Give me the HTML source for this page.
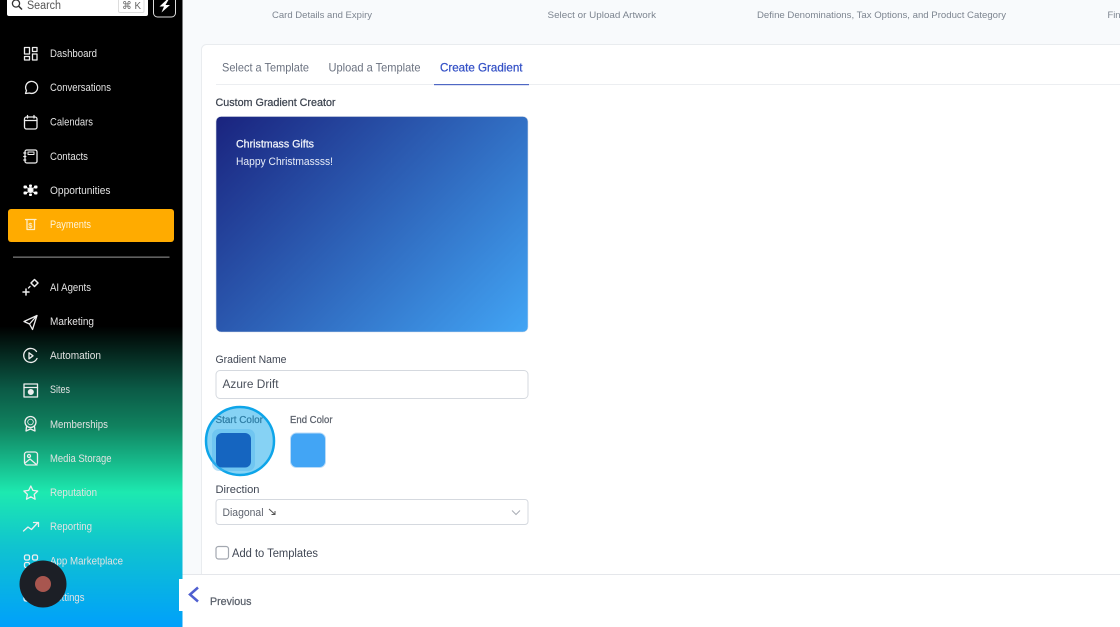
<!DOCTYPE html>
<html><head><meta charset="utf-8">
<style>
html,body{margin:0;padding:0;width:1120px;height:627px;overflow:hidden;background:#f8fafc}
svg{display:block;position:absolute;left:0;top:0;filter:blur(.3px)}
text{font-family:"Liberation Sans",sans-serif}
.n{font-size:11px;fill:#e2e2e2}
.i{fill:none;stroke:#eee;stroke-width:1.3;stroke-linejoin:round;stroke-linecap:round}
.m{stroke-width:.25px}
</style></head><body>
<svg width="1120" height="627" viewBox="0 0 1120 627" xmlns="http://www.w3.org/2000/svg">
<defs>
<linearGradient id="side" x1="0" y1="0" x2="0" y2="1">
<stop offset="0" stop-color="#000"/><stop offset=".52" stop-color="#000"/>
<stop offset=".62" stop-color="#0b5a46"/><stop offset=".68" stop-color="#10825f"/>
<stop offset=".785" stop-color="#1de9b0"/><stop offset=".87" stop-color="#10c4cf"/>
<stop offset="1" stop-color="#00a0fb"/>
</linearGradient>
<linearGradient id="card" gradientUnits="userSpaceOnUse" x1="240.100" y1="92.400" x2="503.900" y2="356.100">
<stop offset="0" stop-color="#1a237e"/><stop offset="1" stop-color="#42a5f5"/>
</linearGradient>
</defs>
<rect x="0" y="0" width="1120" height="627" fill="#f8fafc"/>

<!-- sidebar -->
<rect x="0" y="0" width="182.500" height="627" fill="url(#side)"/>
<rect x="7" y="-6" width="141" height="22" rx="2" fill="#fff"/>
<circle cx="16" cy="3.500" r="3.600" fill="none" stroke="#333" stroke-width="1.300"/>
<path d="M18.800 6.300L22 9.500" stroke="#333" stroke-width="1.500" fill="none"/>
<text x="27" y="9" font-size="11.500" fill="#555" textLength="34" lengthAdjust="spacingAndGlyphs">Search</text>
<rect x="118.500" y="-5" width="25.500" height="17.500" rx="1.500" fill="#fff" stroke="#ddd"/>
<text x="122" y="9" font-size="10.500" fill="#666" textLength="19" lengthAdjust="spacingAndGlyphs">⌘ K</text>
<rect x="153.500" y="-6" width="22" height="23" rx="4" fill="#000" stroke="#ddd" stroke-width="1"/>
<path d="M167.500 -1L159.500 6.500H164L161.500 12.500L170 5H165.500L169 -1Z" fill="#fff"/>

<rect x="8" y="209" width="166" height="33" rx="3" fill="#ffab00"/>
<rect x="13" y="256.500" width="156.500" height="1.300" fill="#777"/>

<g class="n">
<text x="50" y="57" textLength="47" lengthAdjust="spacingAndGlyphs">Dashboard</text>
<text x="50" y="91" textLength="61" lengthAdjust="spacingAndGlyphs">Conversations</text>
<text x="50" y="125.500" textLength="43" lengthAdjust="spacingAndGlyphs">Calendars</text>
<text x="50" y="160" textLength="38" lengthAdjust="spacingAndGlyphs">Contacts</text>
<text x="50" y="194" textLength="60.500" lengthAdjust="spacingAndGlyphs">Opportunities</text>
<text x="50" y="228" textLength="41" lengthAdjust="spacingAndGlyphs" style="fill:#fff3d8">Payments</text>
<text x="50" y="291" textLength="41" lengthAdjust="spacingAndGlyphs">AI Agents</text>
<text x="50" y="325" textLength="44" lengthAdjust="spacingAndGlyphs">Marketing</text>
<text x="50" y="359" textLength="51" lengthAdjust="spacingAndGlyphs">Automation</text>
<text x="50" y="393" textLength="20" lengthAdjust="spacingAndGlyphs">Sites</text>
<text x="50" y="428" textLength="58" lengthAdjust="spacingAndGlyphs">Memberships</text>
<text x="50" y="462" textLength="61.500" lengthAdjust="spacingAndGlyphs">Media Storage</text>
<text x="50" y="496" textLength="47" lengthAdjust="spacingAndGlyphs">Reputation</text>
<text x="50" y="530" textLength="42" lengthAdjust="spacingAndGlyphs">Reporting</text>
<text x="50" y="564.500" textLength="73" lengthAdjust="spacingAndGlyphs">App Marketplace</text>
<text x="50" y="601" textLength="34.500" lengthAdjust="spacingAndGlyphs">Settings</text>
</g>

<g class="i">
<!-- dashboard -->
<rect x="24.500" y="47.500" width="5" height="6.500"/><rect x="32.500" y="47.500" width="4.500" height="4"/>
<rect x="24.500" y="56.500" width="5" height="3.500"/><rect x="32.500" y="54" width="4.500" height="6"/>
<!-- conversations -->
<path d="M25.500 93.500l1-3a6 6 0 1 1 3 2.500z"/>
<!-- calendars -->
<rect x="24.500" y="117" width="12.500" height="12" rx="2"/><path d="M24.500 120.500h12.500M27.500 115.500v2.500M34 115.500v2.500"/>
<!-- contacts -->
<rect x="25" y="150" width="12" height="13" rx="1.800"/><path d="M23.800 153h2M23.800 156.500h2M23.800 160h2"/><rect x="28" y="152" width="6" height="2.500" stroke-width="1"/>
<!-- opportunities -->
<circle cx="30.500" cy="190" r="2.400" fill="#fff"/><path d="M26 187l3 2M35 187l-3 2M26 193l3-1.500M35 193l-3-1.500" stroke-width="1"/>
<g fill="#fff" stroke="none"><rect x="23.500" y="185.500" width="3.500" height="3" rx="1"/><rect x="34" y="185.500" width="3.500" height="3" rx="1"/><rect x="23.500" y="191.500" width="3.500" height="3" rx="1"/><rect x="34" y="191.500" width="3.500" height="3" rx="1"/><rect x="29" y="184.500" width="3" height="2.500" rx="1"/><rect x="29" y="193.500" width="3" height="2.500" rx="1"/></g>
<!-- payments -->
<path d="M25.500 219.500h10.500M27 219.500v10h7.500v-10" style="stroke:#ffeec8"/>
<text x="28.300" y="228" font-size="7.500" font-weight="bold" style="fill:#ffeec8;stroke:none">$</text>
<!-- ai agents -->
<path d="M34.500 279.500l3.500 3.500-3.500 3.500-3.500-3.500z" stroke-width="1.500"/><path d="M23 292h6M26 289v6" stroke-width="1.500"/><path d="M30 286.500l-1.500 1.500"/>
<!-- marketing -->
<path d="M37 315.500L24 321.500l5.500 2.500 3 5.500zM29.500 324l7.500-8.500"/>
<!-- automation -->
<path d="M36.500 351.500a7 7 0 1 0 .5 7"/><path d="M29 352.800l4 3-4 3z"/>
<!-- sites -->
<rect x="24" y="384" width="13.500" height="13"/><path d="M24 387.500h13.500"/><circle cx="30.800" cy="392" r="2.400" fill="#eee"/>
<!-- memberships -->
<circle cx="30.500" cy="422" r="5.500"/><path d="M26.500 426.500l-.5 4.500 4.500-2 4.500 2-.5-4.500"/><circle cx="30.500" cy="422" r="2.800" stroke-width=".8"/>
<!-- media -->
<rect x="24.500" y="452" width="13" height="13" rx="2.500"/><circle cx="29" cy="456" r="1.500"/><path d="M25 463l5-4 7 6"/>
<!-- reputation -->
<path d="M30.800 486l2.100 4.400 4.800.6-3.500 3.400.9 4.800-4.300-2.400-4.300 2.400.9-4.800-3.500-3.400 4.800-.6z"/>
<!-- reporting -->
<path d="M23.500 531l4.500-4 3.500 2.500 6-6.500M33.500 522.500h5v4"/>
<!-- app market -->
<rect x="24.500" y="555" width="5" height="5" rx="1.500"/><rect x="32.500" y="555" width="5" height="5" rx="1.500"/><rect x="24.500" y="562.500" width="5" height="5" rx="1.500"/>
<!-- settings remnant -->
<path d="M24 592v7q0 2 2 2h6"/>
</g>

<!-- top steps -->
<g font-size="9.500" fill="#7d8590">
<text x="272" y="18" textLength="100" lengthAdjust="spacingAndGlyphs">Card Details and Expiry</text>
<text x="547.500" y="18" textLength="108.500" lengthAdjust="spacingAndGlyphs">Select or Upload Artwork</text>
<text x="757" y="18" textLength="249" lengthAdjust="spacingAndGlyphs">Define Denominations, Tax Options, and Product Category</text>
<text x="1107.500" y="18" textLength="13" lengthAdjust="spacingAndGlyphs">Fin</text>
</g>

<!-- main card -->
<rect x="201.500" y="44.500" width="940" height="560" rx="5" fill="#fff" stroke="#e9ecef"/>
<rect x="216" y="84" width="904" height="1" fill="#eceef1"/>
<g font-size="12">
<text x="222" y="71.500" fill="#6b7280" textLength="87" lengthAdjust="spacingAndGlyphs">Select a Template</text>
<text x="328.500" y="71.500" fill="#6b7280" textLength="92" lengthAdjust="spacingAndGlyphs">Upload a Template</text>
<text x="440" y="71.500" fill="#3451c6" stroke="#3451c6" class="m" textLength="82.500" lengthAdjust="spacingAndGlyphs">Create Gradient</text>
</g>
<rect x="434" y="84" width="95" height="1.200" fill="#4f68c4"/>
<text x="215.500" y="106" font-size="11" fill="#3d4450" stroke="#3d4450" class="m" textLength="120" lengthAdjust="spacingAndGlyphs">Custom Gradient Creator</text>

<rect x="216" y="116.500" width="312" height="215.500" rx="5" fill="url(#card)" stroke="#d8dee8" stroke-width=".6"/>
<text x="236" y="147.500" font-size="11" fill="#f2f5fb" stroke="#f2f5fb" class="m" textLength="78" lengthAdjust="spacingAndGlyphs">Christmass Gifts</text>
<text x="236" y="165" font-size="11" fill="#e8edf8" textLength="97" lengthAdjust="spacingAndGlyphs">Happy Christmassss!</text>

<text x="215.500" y="363" font-size="11" fill="#404754" textLength="71" lengthAdjust="spacingAndGlyphs">Gradient Name</text>
<rect x="216" y="370.500" width="312" height="28" rx="4" fill="#fff" stroke="#d5d9df"/>
<text x="222.500" y="388" font-size="11.500" fill="#4a505b" textLength="56" lengthAdjust="spacingAndGlyphs">Azure Drift</text>

<text x="215.500" y="423" font-size="10" fill="#4f5661" stroke="#4f5661" class="m" textLength="47.500" lengthAdjust="spacingAndGlyphs">Start Color</text>
<text x="290" y="423" font-size="10" fill="#5a606b" stroke="#5a606b" class="m" textLength="42.500" lengthAdjust="spacingAndGlyphs">End Color</text>
<rect x="290.500" y="433" width="35" height="34.500" rx="6" fill="#42a5f5" stroke="#b9dbf8"/>

<!-- highlight -->
<circle cx="240" cy="441" r="34" fill="#0ea5e9" fill-opacity=".5" stroke="#0ea5e9" stroke-width="2.500"/>
<rect x="212" y="429" width="43" height="42" rx="7" fill="#4fb4ee" fill-opacity=".4"/>
<rect x="216" y="433" width="35" height="34.500" rx="6" fill="#1565c0"/>

<text x="215.500" y="493" font-size="11" fill="#404754" textLength="44" lengthAdjust="spacingAndGlyphs">Direction</text>
<rect x="216" y="499.500" width="312" height="25" rx="3" fill="#fff" stroke="#d5d9df"/>
<text x="222.500" y="516" font-size="11" fill="#5d636e" textLength="41" lengthAdjust="spacingAndGlyphs">Diagonal</text>
<path d="M269 509l5.500 5M275 511v3.500h-3.500" fill="none" stroke="#555" stroke-width="1"/>
<path d="M512 510.500l4 4 4-4" fill="none" stroke="#a9adb5" stroke-width="1"/>

<rect x="216" y="546.500" width="12.500" height="12.500" rx="2.500" fill="#fff" stroke="#a3a8b0" stroke-width="1.200"/>
<text x="232" y="557" font-size="11.500" fill="#404754" textLength="86" lengthAdjust="spacingAndGlyphs">Add to Templates</text>

<!-- footer -->
<rect x="182.500" y="574" width="938" height="53" fill="#fff"/>
<rect x="182.500" y="574" width="938" height="1" fill="#e5e7eb"/>
<rect x="179" y="579" width="26" height="32" fill="#fff"/>
<path d="M198 587.500L190 594.500L198 601.500" fill="none" stroke="#4f5fd0" stroke-width="2.500"/>
<text x="210" y="605" font-size="11" fill="#5a606b" stroke="#5a606b" class="m" textLength="41.500" lengthAdjust="spacingAndGlyphs">Previous</text>

<!-- recorder -->
<circle cx="43" cy="584" r="23.500" fill="#1c1f26"/>
<circle cx="43" cy="584" r="8" fill="#a8564f"/>
</svg>
</body></html>
